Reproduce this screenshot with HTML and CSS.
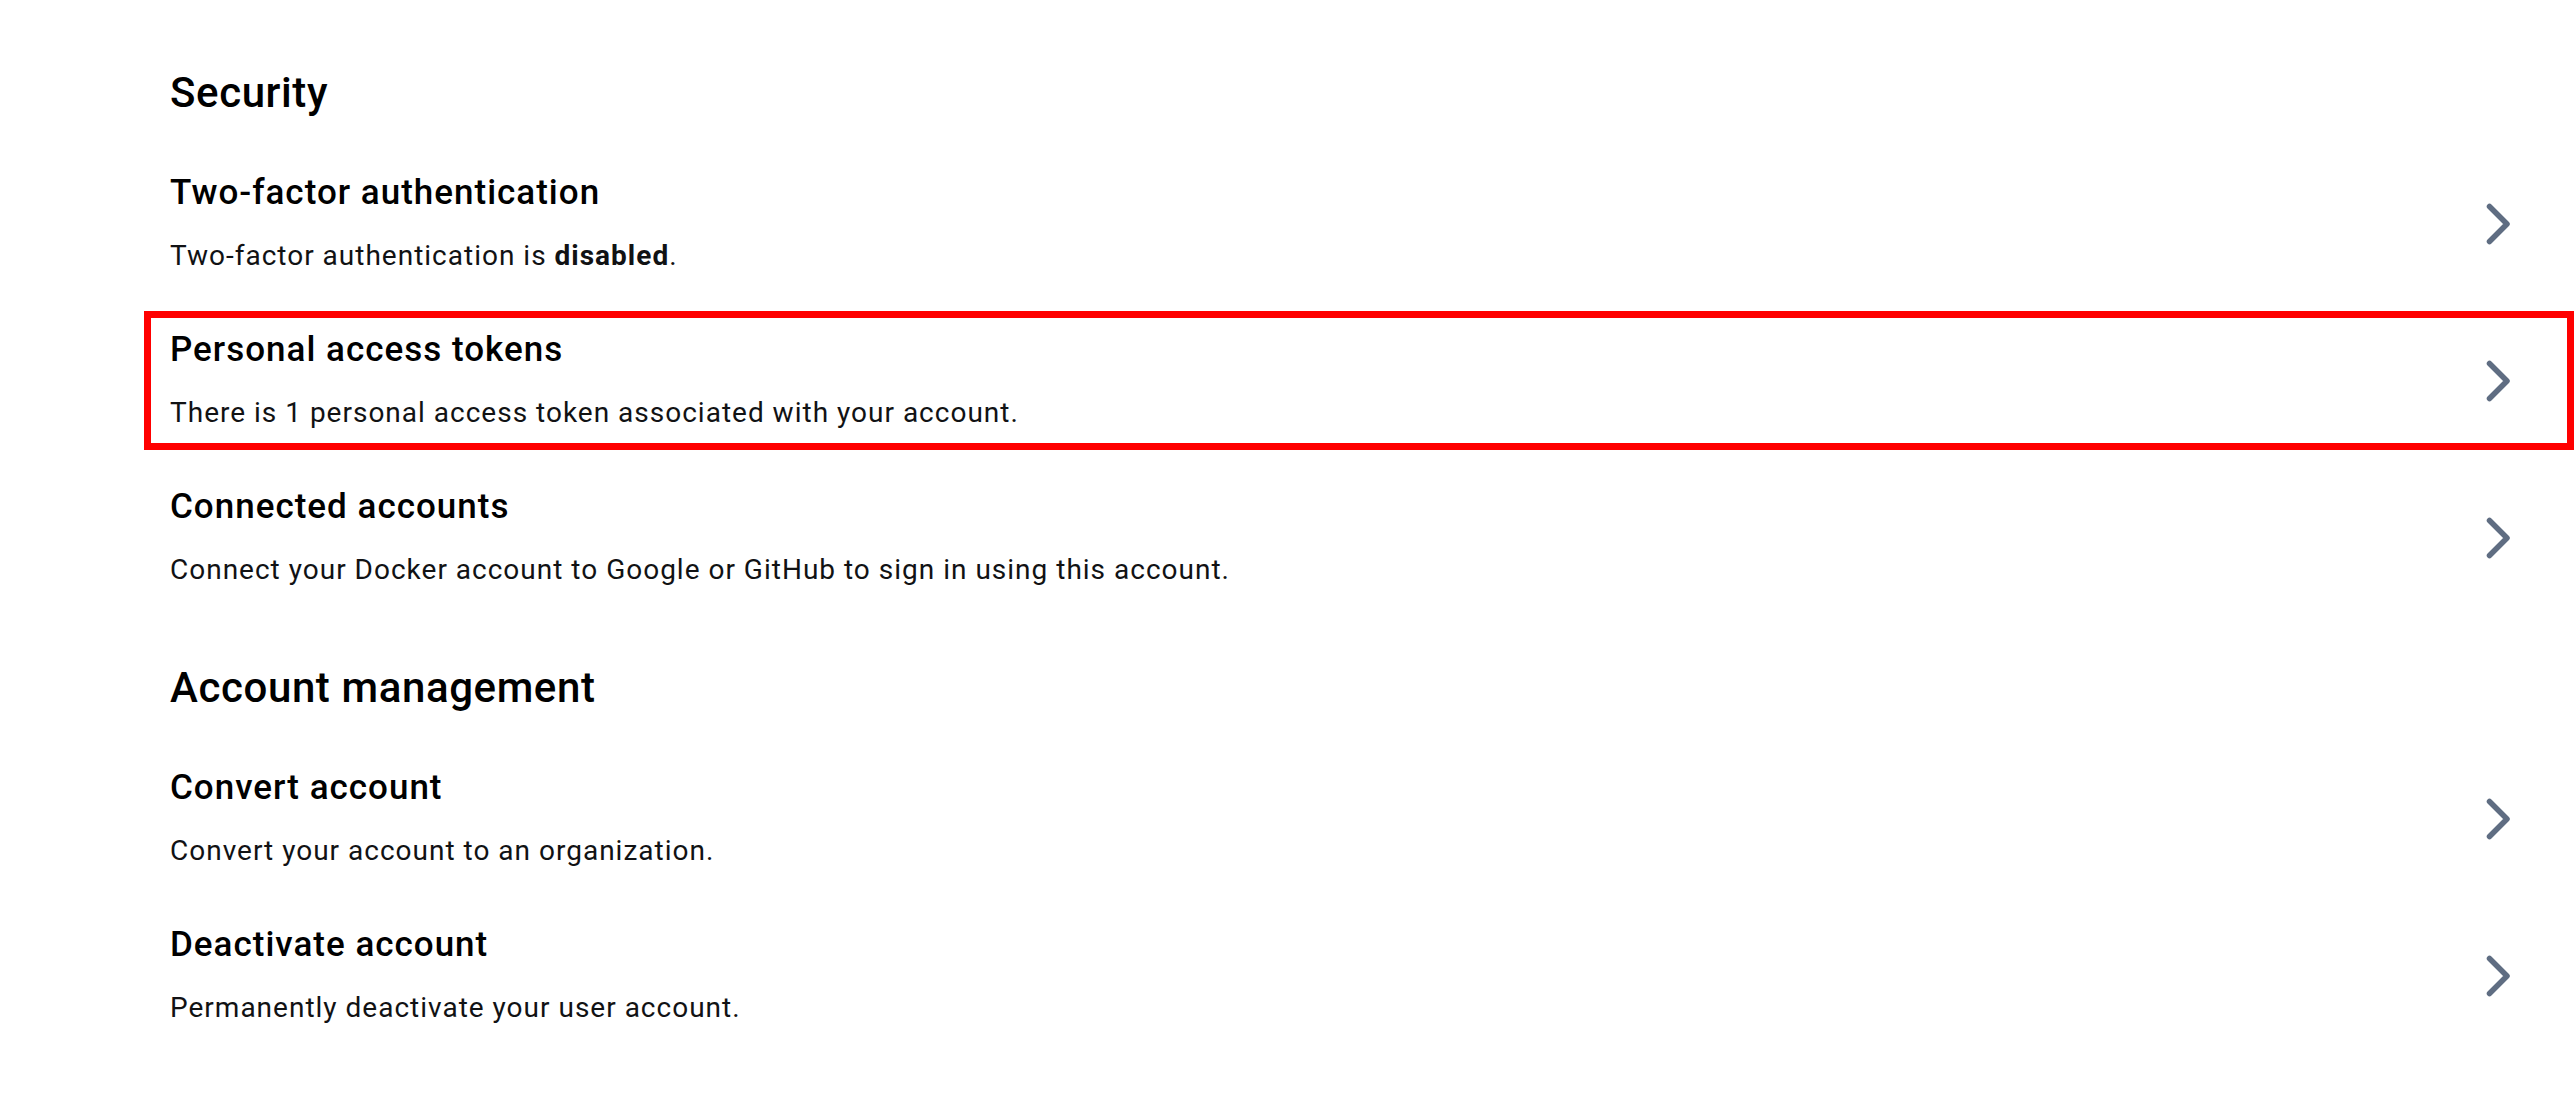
FILE: index.html
```html
<!DOCTYPE html>
<html lang="en">
<head>
<meta charset="utf-8">
<title>Security</title>
<link rel="stylesheet" href="styles.css">
</head>
<body>
<main class="page">
  <section class="section">
    <h2 class="section-title">Security</h2>
    <div class="rows">
      <a class="row">
        <div class="row-text">
          <div class="row-title">Two-factor authentication</div>
          <div class="row-desc">Two-factor authentication is <strong>disabled</strong>.</div>
        </div>
        <svg class="chevron" width="25" height="42" viewBox="0 0 25 42"><polyline points="3.5,3.5 21,21 3.5,38.5"/></svg>
      </a>
      <a class="row row-highlight">
        <div class="row-text">
          <div class="row-title">Personal access tokens</div>
          <div class="row-desc">There is 1 personal access token associated with your account.</div>
        </div>
        <svg class="chevron" width="25" height="42" viewBox="0 0 25 42"><polyline points="3.5,3.5 21,21 3.5,38.5"/></svg>
      </a>
      <a class="row">
        <div class="row-text">
          <div class="row-title">Connected accounts</div>
          <div class="row-desc">Connect your Docker account to Google or GitHub to sign in using this account.</div>
        </div>
        <svg class="chevron" width="25" height="42" viewBox="0 0 25 42"><polyline points="3.5,3.5 21,21 3.5,38.5"/></svg>
      </a>
    </div>
  </section>
  <section class="section section-next">
    <h2 class="section-title">Account management</h2>
    <div class="rows">
      <a class="row">
        <div class="row-text">
          <div class="row-title">Convert account</div>
          <div class="row-desc">Convert your account to an organization.</div>
        </div>
        <svg class="chevron" width="25" height="42" viewBox="0 0 25 42"><polyline points="3.5,3.5 21,21 3.5,38.5"/></svg>
      </a>
      <a class="row">
        <div class="row-text">
          <div class="row-title">Deactivate account</div>
          <div class="row-desc">Permanently deactivate your user account.</div>
        </div>
        <svg class="chevron" width="25" height="42" viewBox="0 0 25 42"><polyline points="3.5,3.5 21,21 3.5,38.5"/></svg>
      </a>
    </div>
  </section>
</main>
</body>
</html>
```

FILE: styles.css
```css
html, body {
  margin: 0;
  padding: 0;
  background: #ffffff;
}

body {
  font-family: Roboto, "Liberation Sans", Arial, sans-serif;
  color: #000000;
}

.page {
  padding: 68px 63px 0 170px;
}

.section-title {
  margin: 0 0 27px 0;
  font-size: 42px;
  line-height: 50px;
  font-weight: 500;
  letter-spacing: 0.6px;
  color: #000000;
}

.section-next {
  margin-top: 47px;
}

.rows {
  display: flex;
  flex-direction: column;
}

.row {
  position: relative;
  display: flex;
  align-items: center;
  justify-content: space-between;
  padding: 27px 0 28px 0;
  color: inherit;
  text-decoration: none;
}

.row-text {
  display: flex;
  flex-direction: column;
  gap: 24px;
}

.row-title {
  font-size: 35px;
  line-height: 42px;
  font-weight: 500;
  letter-spacing: 1px;
  color: #000000;
}

.row-desc {
  font-size: 28px;
  line-height: 36px;
  font-weight: 400;
  letter-spacing: 1px;
  color: #111214;
}

.row-desc strong {
  font-weight: 700;
}

.chevron {
  flex: none;
  margin-top: 2px;
}

.chevron polyline {
  fill: none;
  stroke: #5f6d82;
  stroke-width: 5.5;
  stroke-linecap: round;
  stroke-linejoin: round;
}

.row-highlight::after {
  content: "";
  position: absolute;
  top: 9px;
  bottom: 9px;
  left: -26px;
  right: -63px;
  border: 7px solid #ff0000;
  pointer-events: none;
}
```
